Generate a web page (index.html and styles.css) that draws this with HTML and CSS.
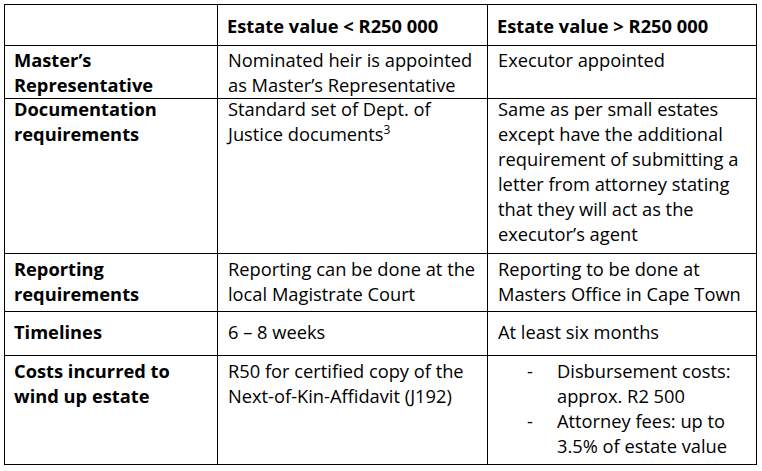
FILE: index.html
```html
<!DOCTYPE html>
<html>
<head>
<meta charset="utf-8">
<link rel="stylesheet" href="styles.css">
</head>
<body>
<div class="estate">
  <div class="cell h r-head"></div>
  <div class="cell h r-head">Estate value &lt; R250 000</div>
  <div class="cell h r-head">Estate value &gt; R250 000</div>

  <div class="cell h r-master">Master’s Representative</div>
  <div class="cell r-master">Nominated heir is appointed as Master’s Representative</div>
  <div class="cell r-master">Executor appointed</div>

  <div class="cell h r-docs"><p>Documentation requirements</p></div>
  <div class="cell r-docs"><p>Standard set of Dept. of Justice documents<sup>3</sup></p></div>
  <div class="cell r-docs"><p>Same as per small estates except have the additional requirement of submitting a letter from attorney stating that they will act as the executor’s agent</p></div>

  <div class="cell h r-report">Reporting requirements</div>
  <div class="cell r-report">Reporting can be done at the local Magistrate Court</div>
  <div class="cell r-report">Reporting to be done at Masters Office in Cape Town</div>

  <div class="cell h r-time">Timelines</div>
  <div class="cell r-time">6 – 8 weeks</div>
  <div class="cell r-time">At least six months</div>

  <div class="cell h r-costs">Costs incurred to wind up estate</div>
  <div class="cell r-costs">R50 for certified copy of the Next-of-Kin-Affidavit (J192)</div>
  <div class="cell r-costs">
    <ul class="dash">
      <li>Disbursement costs: approx. R2 500</li>
      <li>Attorney fees: up to 3.5% of estate value</li>
    </ul>
  </div>
</div>
</body>
</html>
```

FILE: styles.css
```css
html, body {
  margin: 0;
  padding: 0;
  background: #fff;
}
body {
  padding: 4px;
  font-family: "Open Sans", "Liberation Sans", sans-serif;
  font-size: 18.3px;
  line-height: 25px;
  color: #000;
}
.estate {
  display: grid;
  grid-template-columns: 213px 270px 269px;
  grid-template-rows: 41px 53px 155px 58px 44px 109px;
  width: 753px;
  box-sizing: border-box;
  border-left: 1px solid #000;
  border-top: 1px solid #000;
}
.cell {
  box-sizing: border-box;
  border-right: 1px solid #000;
  border-bottom: 1px solid #000;
  padding: 0 2px 0 10px;
}
.cell.h {
  font-weight: 700;
  padding-left: 9px;
  padding-right: 4px;
}
.cell p { margin: 0; }
.r-head { padding-top: 8px; }
.r-master { padding-top: 1px; }
.r-docs p { margin-top: -3px; }
.r-report { padding-top: 2px; }
.r-time { padding-top: 7px; }
.r-costs { padding-top: 2px; }
sup {
  font-size: 12px;
  line-height: 0;
  vertical-align: 7px;
}
.dash {
  list-style: none;
  margin: 0;
  padding: 0 0 0 59px;
}
.dash li { position: relative; }
.dash li::before {
  content: "-";
  position: absolute;
  left: -30px;
}
```
